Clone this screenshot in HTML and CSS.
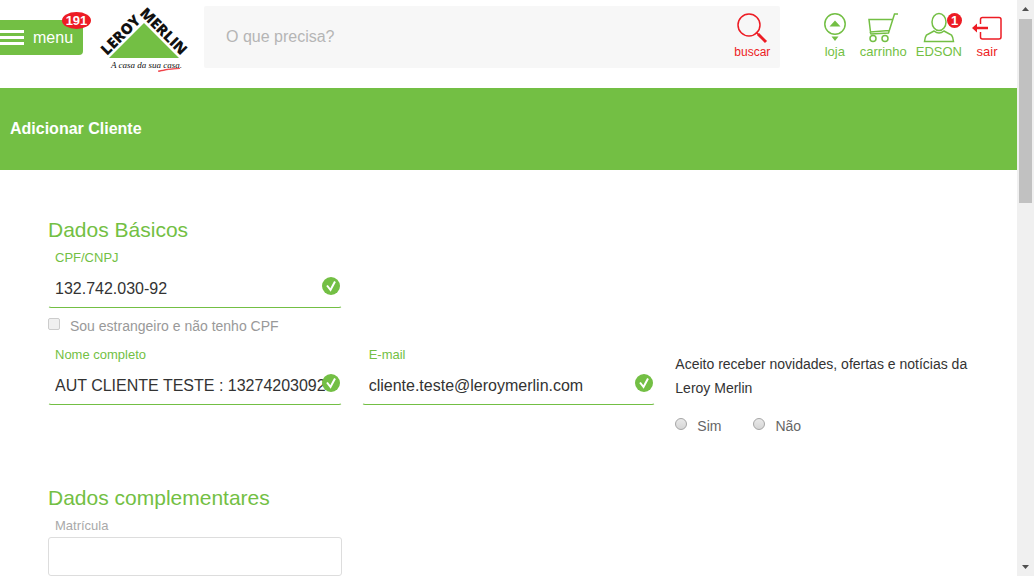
FILE: index.html
```html
<!DOCTYPE html>
<html lang="pt-BR">
<head>
<meta charset="utf-8">
<title>Adicionar Cliente</title>
<link rel="stylesheet" href="styles.css">
</head>
<body>
<div class="page">
  <header class="header">
    <button class="menu" type="button">
      <svg class="menu-icon" viewBox="0 0 24 15" aria-hidden="true"><path d="M0 1.5h24M0 7.5h24M0 13.5h24"/></svg>
      <span>menu</span>
      <span class="badge badge-menu">191</span>
    </button>
    <a class="logo" href="#" aria-label="Leroy Merlin">
      <svg viewBox="0 0 96 76" aria-hidden="true">
        <path class="logo-roof" d="M48 23 L83 58 H13 Z"/>
        <g class="logo-name">
          <text transform="translate(11 56) rotate(-45)">LEROY</text>
          <text transform="translate(43 14) rotate(45)">MERLIN</text>
        </g>
        <text class="logo-slogan" x="15" y="68">A casa da sua casa.</text>
        <path class="logo-stroke" d="M62 71 Q72 68 84 68.500 Q72 69 63 71.500Z"/>
      </svg>
    </a>
    <form class="search">
      <input class="search-input" type="text" placeholder="O que precisa?" aria-label="O que precisa?">
      <button class="search-button" type="button">
        <svg class="icon-search" viewBox="0 0 32 32" aria-hidden="true"><circle cx="13" cy="13" r="11"/><path class="thin" d="M20 20l3 3"/><path class="thick" d="M22 22l8 8"/></svg>
        <span>buscar</span>
      </button>
    </form>
    <nav class="links">
      <a class="link" href="#">
        <svg class="link-icon" viewBox="0 0 32 32" aria-hidden="true"><circle cx="16" cy="12" r="10.200"/><path class="solid" d="M10.500 14.500L16 8.500l5.500 6zM12.500 24.500h7L16 29z"/></svg>
        <span>loja</span>
      </a>
      <a class="link" href="#">
        <svg class="link-icon" viewBox="0 0 32 32" aria-hidden="true"><path d="M31 2H27.500L21.500 21L4 22L3 20M26 7.500H2L3.500 20L22 18.500"/><circle cx="6" cy="26.500" r="3"/><circle cx="18" cy="26.500" r="3"/></svg>
        <span>carrinho</span>
      </a>
      <a class="link" href="#">
        <svg class="link-icon" viewBox="0 0 32 32" aria-hidden="true"><ellipse cx="16" cy="10" rx="7" ry="8.500"/><path d="M11 19L3.500 23Q2 25 1.500 29.500h29Q30 25 28.500 23L21 19Q16 23 11 19z"/></svg>
        <span>EDSON</span>
        <span class="badge badge-user">1</span>
      </a>
      <a class="link link-exit" href="#">
        <svg class="link-icon" viewBox="0 0 32 32" aria-hidden="true"><path d="M9.500 12V7.500q0-2 2-2H28q2 0 2 2V25q0 2-2 2H11.500q-2 0-2-2V20"/><path class="arrow" d="M17 16H3"/><path class="solid" d="M1 16l5-4.500v9z"/></svg>
        <span>sair</span>
      </a>
    </nav>
  </header>
  <h1 class="title">Adicionar Cliente</h1>
  <main class="content">
    <h2 class="section-title">Dados Básicos</h2>
    <div class="grid">
      <div class="field valid">
        <label for="cpf">CPF/CNPJ</label>
        <input id="cpf" type="text" value="132.742.030-92">
        <svg class="check" viewBox="0 0 18 18" aria-hidden="true"><circle cx="9" cy="9" r="9"/><path d="M5 8.500l3.500 4.500L13 4.500"/></svg>
      </div>
    </div>
    <label class="foreign"><input type="checkbox" disabled><span>Sou estrangeiro e não tenho CPF</span></label>
    <div class="grid">
      <div class="field valid">
        <label for="nome">Nome completo</label>
        <input id="nome" type="text" value="AUT CLIENTE TESTE : 13274203092">
        <svg class="check" viewBox="0 0 18 18" aria-hidden="true"><circle cx="9" cy="9" r="9"/><path d="M5 8.500l3.500 4.500L13 4.500"/></svg>
      </div>
      <div class="field valid">
        <label for="email">E-mail</label>
        <input id="email" type="text" value="cliente.teste@leroymerlin.com">
        <svg class="check" viewBox="0 0 18 18" aria-hidden="true"><circle cx="9" cy="9" r="9"/><path d="M5 8.500l3.500 4.500L13 4.500"/></svg>
      </div>
      <fieldset class="news">
        <legend>Aceito receber novidades, ofertas e notícias da Leroy Merlin</legend>
        <div class="options">
          <label><input type="radio" name="news"><span>Sim</span></label>
          <label><input type="radio" name="news"><span>Não</span></label>
        </div>
      </fieldset>
    </div>
    <h2 class="section-title section-next">Dados complementares</h2>
    <div class="grid">
      <div class="field">
        <label for="matricula">Matrícula</label>
        <input id="matricula" type="text">
      </div>
    </div>
  </main>
</div>
<div class="scrollbar" aria-hidden="true">
  <svg class="scroll-arrow" viewBox="0 0 17 17"><path d="M5 11l3.500-4 3.500 4z"/></svg>
  <div class="scroll-track"><div class="scroll-thumb"></div></div>
  <svg class="scroll-arrow" viewBox="0 0 17 17"><path d="M5 6l3.500 4L12 6z"/></svg>
</div>
</body>
</html>
```
FILE: styles.css
```css
:root {
  --green: #73bf44;
  --red: #ed1c24;
}

* { box-sizing: border-box; }

body {
  margin: 0;
  height: 100vh;
  display: flex;
  overflow: hidden;
  background: #fff;
  color: #333;
  font-family: "Liberation Sans", Arial, sans-serif;
  font-size: 14px;
}

button, input { font: inherit; }
svg { display: block; fill: none; }
.page { flex: 1; min-width: 0; overflow: hidden; }

.header {
  display: flex;
  align-items: flex-start;
  height: 88px;
  padding-right: 14px;
}

.menu {
  position: relative;
  display: flex;
  align-items: center;
  gap: 9px;
  width: 83px;
  height: 35px;
  margin-top: 20px;
  padding: 0;
  border: 0;
  border-radius: 0 4px 4px 0;
  background: var(--green);
  color: #fff;
  font-size: 16px;
}
.menu-icon { width: 24px; height: 15px; stroke: #fff; stroke-width: 3; }

.badge {
  position: absolute;
  display: grid;
  place-items: center;
  border-radius: 50%;
  background: var(--red);
  color: #fff;
  font-size: 13px;
  font-weight: bold;
}
.badge-menu { top: -8px; right: -8px; width: 29px; height: 17px; }
.badge-user { top: 1px; right: 0; width: 15px; height: 15px; }

.logo { width: 96px; margin-left: 13px; }
.logo svg { width: 96px; height: 76px; overflow: visible; }
.logo-roof { fill: var(--green); }
.logo-name {
  fill: #111;
  font-family: "Open Sans", sans-serif;
  font-size: 15px;
  font-weight: 800;
}
.logo-slogan {
  fill: #111;
  font-family: "Liberation Serif", serif;
  font-size: 9px;
  font-style: italic;
}
.logo-stroke { fill: var(--red); stroke: var(--red); stroke-width: 0.5; }

.search {
  display: flex;
  flex: 1;
  height: 62px;
  margin: 6px 0 0 12px;
  border-radius: 2px;
  background: #f7f7f7;
}
.search-input {
  flex: 1;
  min-width: 0;
  padding: 0 22px;
  border: 0;
  background: none;
  font-size: 16px;
}
.search-input::placeholder { color: #b5b5b5; }
.search-button {
  display: flex;
  flex-direction: column;
  align-items: center;
  width: 55px;
  padding: 6px 0 0;
  border: 0;
  background: none;
  color: var(--red);
  font-size: 12px;
  line-height: 16px;
}
.icon-search { width: 32px; height: 32px; stroke: currentColor; stroke-width: 1.5; }
.icon-search .thick { stroke-width: 3; }

.links { display: flex; margin: 12px 0 0 39px; }
.link {
  position: relative;
  display: flex;
  flex-direction: column;
  align-items: center;
  margin-right: 9px;
  color: var(--green);
  font-size: 13px;
  line-height: 16px;
  text-decoration: none;
}
.link-exit { margin: 0; color: var(--red); }
.link-icon { width: 32px; height: 32px; stroke: currentColor; stroke-width: 1.5; }
.link-icon .solid { fill: currentColor; stroke: none; }
.link-icon .arrow { stroke-width: 2.5; }

.title {
  margin: 0;
  padding: 29px 10px;
  background: var(--green);
  color: #fff;
  font-size: 16px;
  line-height: 24px;
}

.content { padding: 45px 48px 0; }
.section-title {
  margin: 0 0 2px;
  color: var(--green);
  font-size: 21px;
  font-weight: normal;
  line-height: 30px;
}
.section-next { margin-top: 45px; }

.grid {
  display: grid;
  grid-template-columns: repeat(3, minmax(0, 1fr));
  column-gap: 20px;
}

.field { position: relative; }
.field label {
  display: block;
  padding: 1px 0 1px 7px;
  color: #a9a9a9;
  font-size: 13px;
  line-height: 20px;
}
.field input {
  display: block;
  width: 100%;
  height: 39px;
  padding: 0 6px;
  border: 1px solid #ddd;
  border-radius: 3px;
  background: #fff;
  color: #333;
  font-size: 16px;
}
.valid label { color: var(--green); }
.valid input { border-color: transparent transparent var(--green); }
.check { position: absolute; top: 30px; right: 2px; width: 18px; height: 18px; }
.check circle { fill: var(--green); }
.check path { stroke: #fff; stroke-width: 2; }

.foreign {
  display: flex;
  align-items: center;
  gap: 10px;
  height: 36px;
  color: #999;
}

input[type="checkbox"], input[type="radio"] {
  appearance: none;
  width: 12px;
  height: 12px;
  margin: 0 0 4px;
  border: 1px solid #a5a5a5;
  border-radius: 50%;
  background: linear-gradient(#e9e9e9, #d6d6d6);
}
input[type="checkbox"] {
  border-color: #ccc;
  border-radius: 2px;
  background: #f0f0f0;
}

.news {
  min-width: 0;
  margin: 0;
  padding: 8px 0 0;
  border: 0;
}
.news legend { float: left; padding: 0; line-height: 24px; }
.options {
  display: flex;
  gap: 32px;
  clear: both;
  padding-top: 14px;
  color: #666;
  line-height: 24px;
}
.options label { display: flex; align-items: center; gap: 10px; }

.scrollbar {
  display: flex;
  flex-direction: column;
  width: 17px;
  background: #f0f0f0;
}
.scroll-arrow { width: 17px; height: 17px; fill: #505050; }
.scroll-track { flex: 1; padding: 2px 2px 0; }
.scroll-thumb { height: 34%; background: #c1c1c1; }
```
